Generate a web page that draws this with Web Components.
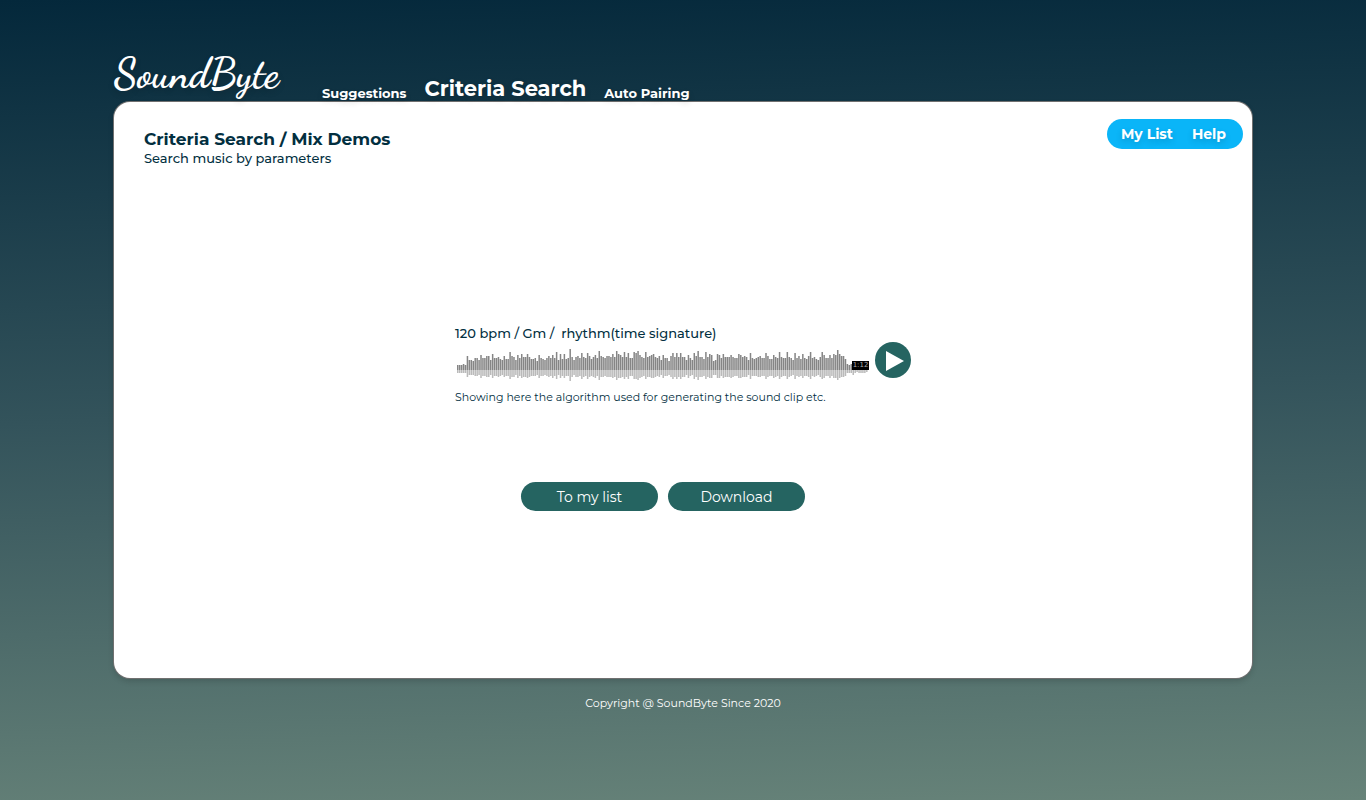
<!DOCTYPE html>
<html lang="en">
<head>
<meta charset="utf-8">
<title>SoundByte</title>
<style>
html { min-height: 100%; background: linear-gradient(178deg, #04283b 0%, #33535b 50%, #678379 100%); }
body { margin: 0; font-family: Montserrat, Inter, sans-serif; color: #022f3f; }
</style>
</head>
<body>
<sb-page>
  <sb-header slot="header"></sb-header>
  <sb-card>
    <sb-title heading="Criteria Search / Mix Demos" slot="title">Search music by parameters</sb-title>
    <sb-links slot="links"></sb-links>
    <sb-clip></sb-clip>
  </sb-card>
  <span slot="footer">Copyright @ SoundByte Since 2020</span>
</sb-page>
<script>
function define(name, html, setup) {
  const template = document.createElement('template');
  template.innerHTML = html;
  customElements.define(name, class extends HTMLElement {
    constructor() {
      super();
      this.attachShadow({ mode: 'open' }).append(template.content.cloneNode(true));
    }
    connectedCallback() { if (setup) setup(this, this.shadowRoot); }
  });
}

define('sb-page', `
<style>
:host { display: block; padding: 46px 114px 0; }
footer { text-align: center; color: #fff; font-size: 11px; line-height: 16px; margin: 17px 0; }
</style>
<slot name="header"></slot>
<main><slot></slot></main>
<footer><slot name="footer"></slot></footer>`);

define('sb-header', `
<style>
:host { display: flex; align-items: flex-end; height: 56px; color: #fff; position: relative; z-index: 1; text-shadow: 0 3px 6px rgba(0,0,0,.16); }
a { color: inherit; text-decoration: none; white-space: nowrap; }
.logo { font: 700 41px/56px "Dancing Script", "Liberation Serif", serif; width: 208px; }
nav { display: flex; align-items: flex-end; gap: 18px; font-weight: 700; font-size: 13px; line-height: 18px; }
.current { font-size: 21px; line-height: 26px; }
</style>
<a class="logo" href="#">SoundByte</a>
<nav>
  <a href="#suggestions">Suggestions</a>
  <a class="current" href="#criteria" aria-current="page">Criteria Search</a>
  <a href="#pairing">Auto Pairing</a>
</nav>`);

define('sb-card', `
<style>
:host { display: block; box-sizing: border-box; min-height: 576px; background: #fff; border-radius: 16px; box-shadow: 0 0 0 1px #707070, 0 3px 6px rgba(0,0,0,.16); padding: 17px 9px 32px 30px; }
.top { display: flex; justify-content: space-between; align-items: flex-start; }
</style>
<div class="top"><slot name="title"></slot><slot name="links"></slot></div>
<slot></slot>`);

define('sb-title', `
<style>
:host { display: block; padding: 9px 0 2px; }
h1 { margin: 0; font-size: 17px; line-height: 22px; font-weight: 700; }
p { margin: 0; font-size: 13px; line-height: 16px; font-weight: 500; }
</style>
<h1></h1><p><slot></slot></p>`, (host, root) => {
  root.querySelector('h1').textContent = host.getAttribute('heading');
});

define('sb-links', `
<style>
:host { display: flex; box-sizing: border-box; justify-content: space-between; width: 136px; padding: 0 17px 0 14px; border-radius: 15px; background: #0ab5f8; font-size: 14px; line-height: 30px; font-weight: 700; }
a { color: #fff; text-decoration: none; text-shadow: 0 3px 6px rgba(0,0,0,.16); }
</style>
<a href="#list">My List</a><a href="#help">Help</a>`);

define('sb-clip', `
<style>
:host { display: flex; flex-direction: column; align-items: center; margin: 156px 21px 0 0; }
section { width: 456px; }
h2 { margin: 0; font-size: 13px; line-height: 18px; font-weight: 500; white-space: pre; }
.row { display: flex; justify-content: space-between; align-items: center; height: 36px; }
p { margin: 11px 0 0; font-size: 11px; line-height: 16px; }
.actions { display: flex; gap: 10px; margin: 77px 40px 0 0; }
.actions button { width: 137px; height: 29px; border: 0; border-radius: 15px; background: #256461; color: #fff; font: inherit; font-size: 14px; padding: 0; }
.play { width: 36px; height: 36px; padding: 0; border: 0; border-radius: 50%; background: #256461; }
.play svg { display: block; }
</style>
<section>
  <h2>120 bpm / Gm /  rhythm(time signature)</h2>
  <div class="row">
    <sb-wave></sb-wave>
    <button class="play" aria-label="Play"><svg width="36" height="36" viewBox="0 0 36 36"><path d="M11 9L29 19L11 29Z" fill="#fff"/></svg></button>
  </div>
  <p>Showing here the algorithm used for generating the sound clip etc.</p>
</section>
<div class="actions"><button>To my list</button><button>Download</button></div>`);

define('sb-wave', `
<style>
:host { display: block; position: relative; width: 414px; height: 36px; }
svg { display: block; }
.time { position: absolute; right: 0; top: 19px; width: 17px; height: 9px; background: #000; color: #aaa; font: 7px/9px "DejaVu Sans", sans-serif; text-align: center; }
</style>
<svg width="414" height="40" viewBox="0 0 414 40" aria-hidden="true"><path class="up" fill="#858585"/><path class="down" fill="#bababa"/></svg>
<span class="time">1:12</span>`, (host, root) => {
  // One base-36 digit per bar: its height above the centre line.
  const heights = [...('55565eaa9ccafcceeagccdbaebbiedafcgd' +
    'dgdbbc9fcbacecfciagbgbcldadechdchebdfcjedc' +
    'eedgdjgfdidhccihjfdcidefgdceafcc9ehdhdhddafcahejddbidgf9agfcgdddfdccgfdeda' +
    'hcbcdecchebbfdcidccidcahcebgcbeicdbadifccfcgfkgeeb65695455554')
    ].map(c => parseInt(c, 36));
  const pitch = 411 / heights.length;
  let up = '', down = '';
  heights.forEach((h, i) => {
    const x = (2 + i * pitch).toFixed(2);
    const below = Math.round(h / 2);
    up += `M${x} 28v-${h}h1.5v${h}z`;
    down += `M${x} 28v${below}h1.5v-${below}z`;
  });
  root.querySelector('.up').setAttribute('d', up);
  root.querySelector('.down').setAttribute('d', down);
});
</script>
</body>
</html>
